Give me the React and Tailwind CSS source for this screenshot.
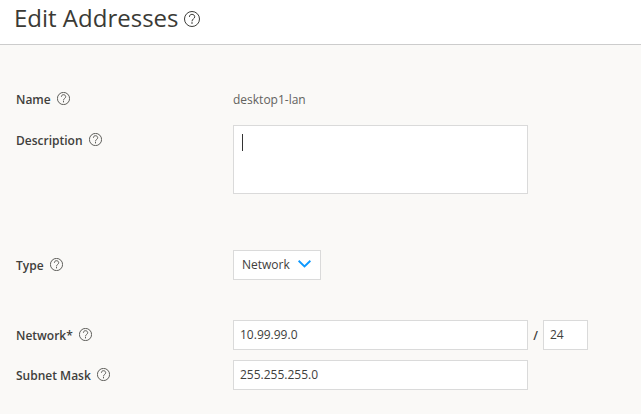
function HelpIcon({ className }) {
  return (
    <svg viewBox="0 0 13 13" fill="none" stroke="#3a3a36" strokeWidth="0.8" className={`shrink-0 ${className}`}>
      <circle cx="6.5" cy="6.5" r="6.1" />
      <path d="M4.4 4.8C4.4 3.4 5.3 2.7 6.5 2.7s2.2.8 2.2 2c0 1.7-2.2 1.7-2.2 3.7" />
      <path strokeWidth="1" d="M6.5 9.2v1.1" />
    </svg>
  );
}

function Row({ label, className, children }) {
  return (
    <div className={`flex items-start ${className}`}>
      <div className="flex h-[30px] w-[217px] shrink-0 items-center gap-1.5 font-semibold">
        <span className="mt-0.5 whitespace-nowrap">{label}</span>
        <HelpIcon className="mb-px size-[13px]" />
      </div>
      {children}
    </div>
  );
}

export default function App() {
  return (
    <div className="h-[414px] w-[641px] overflow-hidden bg-[#faf9f7] font-['Open_Sans',sans-serif] text-[12px] leading-4 text-[#40403c]">
      <header className="flex h-[45px] items-start gap-1.5 border-b border-[#cccccc] bg-white pl-3.5">
        <h1 className="mt-0.5 text-[24px] leading-8 font-normal text-[#3a3a35]">Edit Addresses</h1>
        <HelpIcon className="mt-[11px] size-4" />
      </header>
      <main className="flex flex-col pt-[39px] pl-4">
        <Row label="Name" className="h-[41px]">
          <span className="mt-2 text-[#62625e]">desktop1-lan</span>
        </Row>
        <Row label="Description" className="h-[125px]">
          <div className="h-[69px] w-[295px] border border-[#dadada] bg-white pt-2 pl-2">
            <div className="h-[17px] w-px bg-[#333333]" />
          </div>
        </Row>
        <Row label="Type" className="h-[70px]">
          <button className="flex h-[30px] w-[88px] items-center gap-2 border border-[#dadada] bg-white pl-2">
            <span>Network</span>
            <svg viewBox="0 0 13 8" fill="none" stroke="#0c98ff" strokeWidth="1.9" className="mb-0.5 h-2 w-[13px]">
              <path d="M.6.8 6.5 6.5 12.4.8" />
            </svg>
          </button>
        </Row>
        <Row label="Network*" className="h-10">
          <div className="flex h-[30px] w-[295px] items-center border border-[#dadada] bg-white pl-1.5">10.99.99.0</div>
          <span className="mt-2 w-[15px] text-center font-semibold">/</span>
          <div className="flex h-[30px] w-[45px] items-center border border-[#dadada] bg-white pl-1.5">24</div>
        </Row>
        <Row label="Subnet Mask" className="h-[30px]">
          <div className="flex h-[30px] w-[295px] items-center border border-[#dadada] bg-white pl-1.5">255.255.255.0</div>
        </Row>
      </main>
    </div>
  );
}
